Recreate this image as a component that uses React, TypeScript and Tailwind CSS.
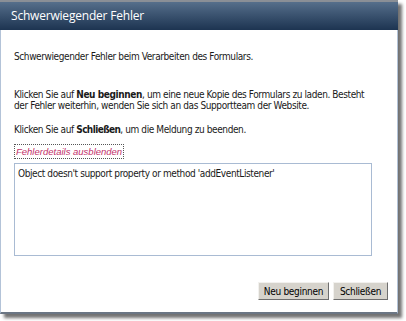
export default function App() {
  const body = { fontFamily: '"DejaVu Sans Condensed", "DejaVu Sans", sans-serif' } as const;

  return (
    <div className="w-[406px] h-[321px] bg-white overflow-hidden">
      <div className="w-[398px] h-[314px] flex flex-col border-t-2 border-t-[#8a8f96] shadow-[4px_4px_3px_rgba(0,0,0,0.55)]">
        <div
          className="h-[28px] flex items-center pl-[11px] text-white text-[12px] tracking-[-0.2px] bg-gradient-to-b from-[#566f8b] to-[#1d3451]"
          style={{ fontFamily: '"Open Sans", sans-serif' }}
        >
          Schwerwiegender Fehler
        </div>
        <div
          className="flex-1 flex flex-col bg-white border-x border-x-[#b3c3d8] border-b-2 border-b-[#6b7684] pl-[13px] pr-[20px] text-[10px] leading-[11px] tracking-[-0.4px] text-[#1a1a1a]"
          style={body}
        >
          <p className="mt-[21px]">Schwerwiegender Fehler beim Verarbeiten des Formulars.</p>
          <p className="mt-[27px]">
            Klicken Sie auf <b>Neu beginnen</b>, um eine neue Kopie des Formulars zu laden. Besteht
            der Fehler weiterhin, wenden Sie sich an das Supportteam der Website.
          </p>
          <p className="mt-[13px]">
            Klicken Sie auf <b className="tracking-[-0.6px]">Schließen</b>, um die Meldung zu beenden.
          </p>
          <div className="mt-[9px] self-start border border-dotted border-[#555] px-[1px] py-[1px] italic text-[#c2306a] text-[9.5px] leading-[11px] tracking-normal font-['Liberation_Sans',sans-serif]">
            Fehlerdetails ausblenden
          </div>
          <div className="mt-[4px] mr-[5px] h-[93px] border border-[#a9bbd3] px-[3px] py-[4px]">
            Object doesn't support property or method 'addEventListener'
          </div>
          <div className="mt-auto mb-[12px] flex justify-end gap-[4px] mr-[-11px]">
            <button className="h-[18px] w-[71px] bg-[#d6d3cc] border border-t-[#f2f1ee] border-l-[#f2f1ee] border-r-[#6e6e6e] border-b-[#6e6e6e] text-[10px] tracking-[-0.3px] text-black" style={body}>
              Neu beginnen
            </button>
            <button className="h-[18px] w-[55px] bg-[#d6d3cc] border border-t-[#f2f1ee] border-l-[#f2f1ee] border-r-[#6e6e6e] border-b-[#6e6e6e] text-[10px] tracking-[-0.3px] text-black" style={body}>
              Schließen
            </button>
          </div>
        </div>
      </div>
    </div>
  );
}
